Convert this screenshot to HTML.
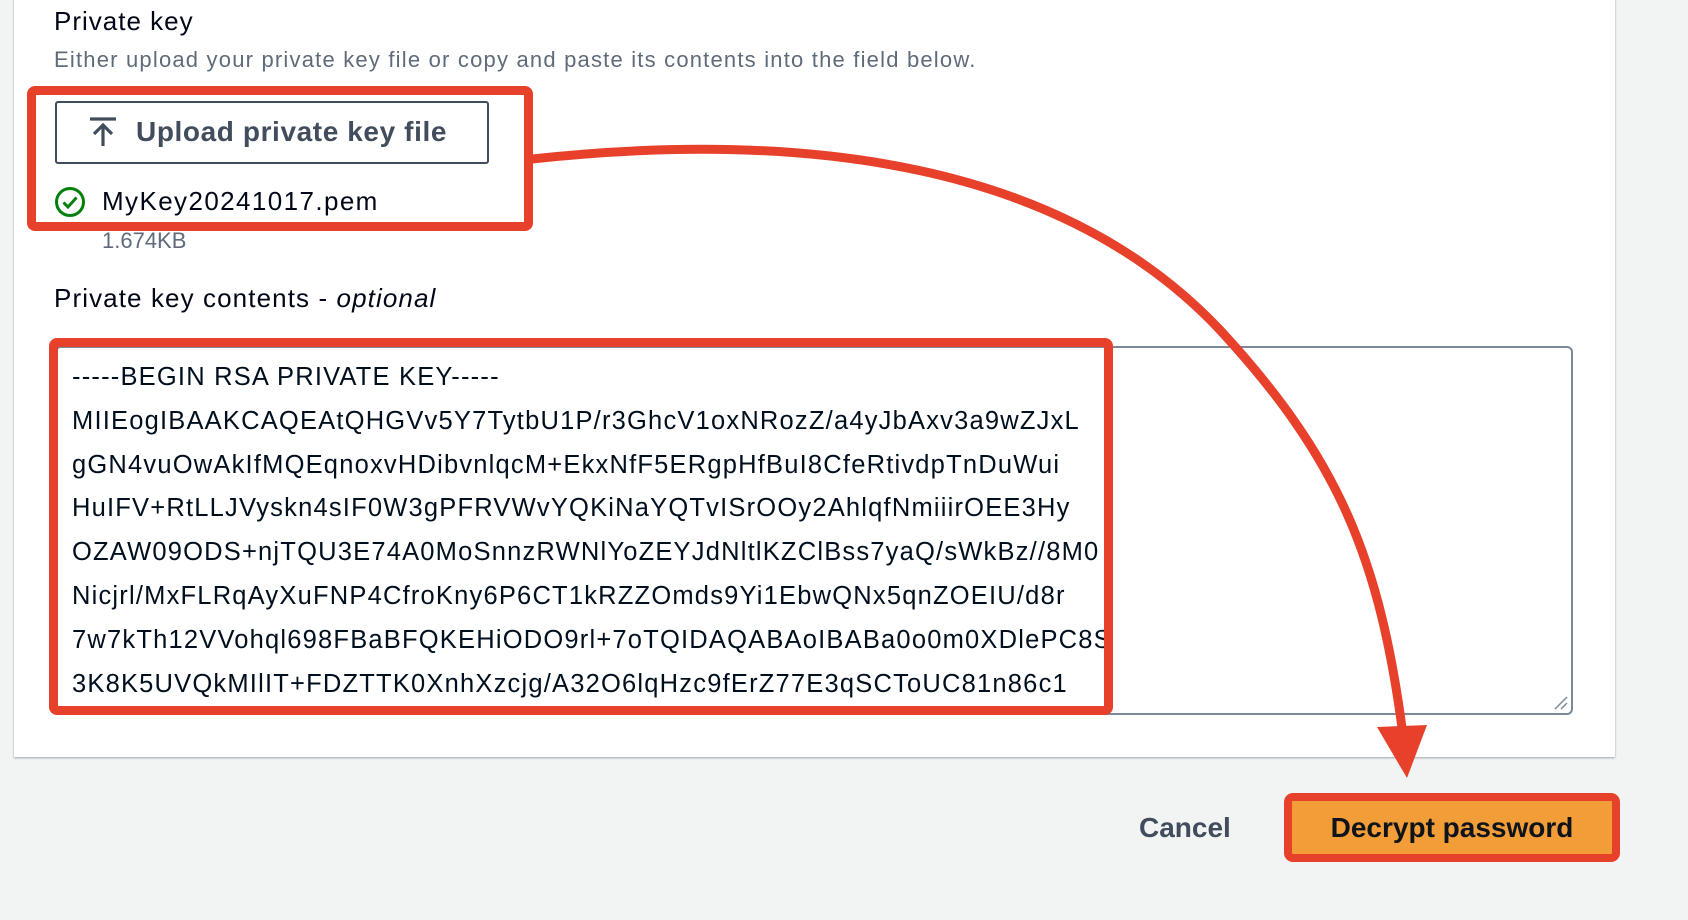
<!DOCTYPE html>
<html><head><meta charset="utf-8"><style>
*{margin:0;padding:0;box-sizing:border-box}
body{width:1688px;height:920px;background:#f2f3f3;font-family:"Liberation Sans",sans-serif;position:relative;overflow:hidden}
.card{position:absolute;left:14px;top:-10px;width:1601px;height:767px;background:#fff;box-shadow:0 1px 2px rgba(0,20,40,.35);}
.t{position:absolute;white-space:nowrap}
.ta{position:absolute;left:55px;top:346px;width:1518px;height:369px;border:2px solid #7d8998;border-radius:6px;background:#fff}
.code{position:absolute;left:72px;top:356px;font-size:25.5px;line-height:43.8px;color:#000f1e;white-space:pre;width:1035px;overflow:hidden;letter-spacing:1.2px}
</style></head><body>
<div class="card"></div>
<div class="t" style="left:54px;top:6px;font-size:26px;color:#000716;letter-spacing:1px">Private key</div>
<div class="t" style="left:54px;top:47px;font-size:22px;color:#5f6b7a;letter-spacing:1.2px">Either upload your private key file or copy and paste its contents into the field below.</div>
<div style="position:absolute;left:55px;top:101px;width:434px;height:63px;border:2px solid #414d5c;border-radius:3px"></div>
<svg style="position:absolute;left:88px;top:116px" width="32" height="34" viewBox="0 0 32 34"><path d="M2 3H28M15 30V9M6 18L15 9L24 18" stroke="#414d5c" stroke-width="3.2" fill="none"/></svg>
<div class="t" style="left:136px;top:116px;font-size:28px;font-weight:bold;color:#414d5c;letter-spacing:0.6px">Upload private key file</div>
<svg style="position:absolute;left:54px;top:186px" width="32" height="32" viewBox="0 0 32 32"><circle cx="16" cy="16" r="13.5" stroke="#037f0c" stroke-width="3" fill="none"/><path d="M9.5 16.5L14 21L22.5 11.5" stroke="#037f0c" stroke-width="3" fill="none"/></svg>
<div class="t" style="left:102px;top:186px;font-size:26px;color:#000716;letter-spacing:1.4px">MyKey20241017.pem</div>
<div class="t" style="left:102px;top:228px;font-size:22px;color:#5f6b7a">1.674KB</div>
<div class="t" style="left:54px;top:283px;font-size:26px;color:#000716;letter-spacing:1.1px">Private key contents - <i>optional</i></div>
<div class="ta"></div>
<svg style="position:absolute;left:1553px;top:695px" width="16" height="16"><path d="M2 14L14 2M8 14L14 8" stroke="#7d8998" stroke-width="1.5"/></svg>
<div class="code">-----BEGIN RSA PRIVATE KEY-----
MIIEogIBAAKCAQEAtQHGVv5Y7TytbU1P/r3GhcV1oxNRozZ/a4yJbAxv3a9wZJxL
gGN4vuOwAkIfMQEqnoxvHDibvnlqcM+EkxNfF5ERgpHfBuI8CfeRtivdpTnDuWui
HuIFV+RtLLJVyskn4sIF0W3gPFRVWvYQKiNaYQTvISrOOy2AhlqfNmiiirOEE3Hy
OZAW09ODS+njTQU3E74A0MoSnnzRWNlYoZEYJdNltlKZClBss7yaQ/sWkBz//8M0
Nicjrl/MxFLRqAyXuFNP4CfroKny6P6CT1kRZZOmds9Yi1EbwQNx5qnZOEIU/d8r
7w7kTh12VVohql698FBaBFQKEHiODO9rl+7oTQIDAQABAoIBABa0o0m0XDlePC8S
3K8K5UVQkMIlIT+FDZTTK0XnhXzcjg/A32O6lqHzc9fErZ77E3qSCToUC81n86c1</div>
<div style="position:absolute;left:27px;top:86px;width:506px;height:145px;border:9px solid #e8412b;border-radius:8px"></div>
<div style="position:absolute;left:49px;top:338px;width:1064px;height:377px;border:9px solid #e8412b;border-radius:8px"></div>
<div class="t" style="left:1139px;top:812px;font-size:28px;font-weight:bold;color:#414d5c">Cancel</div>
<div style="position:absolute;left:1284px;top:793px;width:336px;height:69px;background:#f29d38;border:8px solid #e8412b;border-radius:9px"></div>
<div class="t" style="left:1284px;top:812px;width:336px;text-align:center;font-size:28px;font-weight:bold;color:#0f141a">Decrypt password</div>
<svg style="position:absolute;left:0;top:0" width="1688" height="920"><path d="M532 159C800 130 1060 160 1220 330C1340 460 1380 560 1403 735" stroke="#e8412b" stroke-width="9" fill="none"/><path d="M1377 727L1427 725L1407 778Z" fill="#e8412b"/></svg>
</body></html>
